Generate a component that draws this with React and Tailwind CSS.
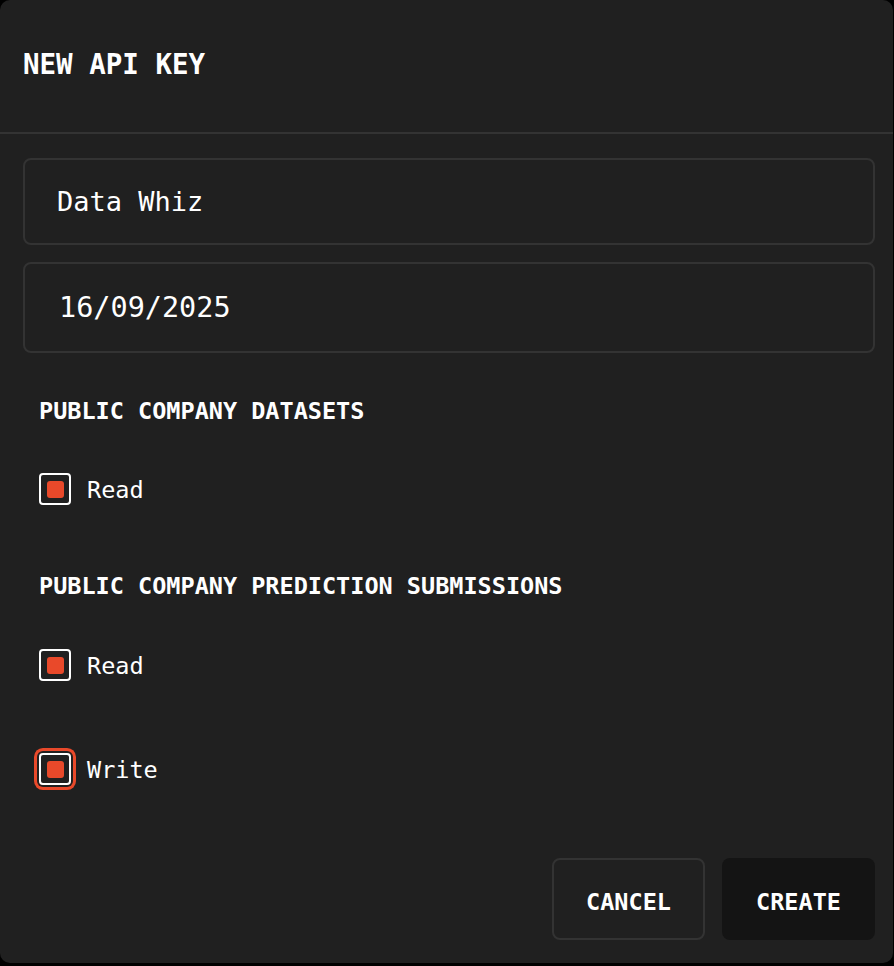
import React from 'react';

const mono = { fontFamily: '"DejaVu Sans Mono", "Liberation Mono", monospace' };

function Check({ focused }) {
    return (
        <span
            className={
                'w-[32px] h-[32px] rounded-[4px] border-2 border-white flex items-center justify-center shrink-0 ' +
                (focused ? 'ring-[3px] ring-[#e9492a] ring-offset-2 ring-offset-[#202020]' : '')
            }
        >
            <span className="w-[17px] h-[17px] rounded-[3px] bg-[#e9492a]" />
        </span>
    );
}

function Option({ label, focused, className }) {
    return (
        <div className={'h-[32px] flex items-center gap-[16px] pl-[16px] ' + className}>
            <Check focused={focused} />
            <span className="pt-[4px] text-[23.5px] text-white leading-none">{label}</span>
        </div>
    );
}

function Heading({ children, className }) {
    return (
        <div className={'h-[24px] flex items-center pl-[16px] text-[23.5px] font-bold text-white leading-none ' + className}>
            {children}
        </div>
    );
}

export default function App() {
    return (
        <div className="min-h-screen bg-black" style={mono}>
            <div className="w-[893px] h-[963px] rounded-[10px] bg-[#202020] flex flex-col">
                <header className="h-[134px] flex items-center px-[23px] pb-[3px] border-b-2 border-[#333333]">
                    <h1 className="text-[27.5px] font-bold text-white leading-none">NEW API KEY</h1>
                </header>

                <div className="px-[23px] pt-[24px] pr-[18px] flex flex-col">
                    <div className="h-[87px] border-2 border-[#333333] rounded-[8px] px-[32px] flex items-center text-[27px] text-white leading-none">
                        Data Whiz
                    </div>
                    <div className="mt-[17px] h-[91px] border-2 border-[#333333] rounded-[8px] px-[34px] pt-[2px] flex items-center text-[28.5px] text-white leading-none">
                        16/09/2025
                    </div>

                    <Heading className="mt-[47px]">PUBLIC COMPANY DATASETS</Heading>
                    <Option label="Read" className="mt-[49px]" />

                    <Heading className="mt-[70px]">PUBLIC COMPANY PREDICTION SUBMISSIONS</Heading>
                    <Option label="Read" className="mt-[50px]" />
                    <Option label="Write" focused className="mt-[72px]" />

                    <div className="mt-[73px] flex justify-end gap-[17px]">
                        <button className="w-[153px] h-[82px] pt-[8px] rounded-[8px] border-2 border-[#333333] text-[23.5px] font-bold text-white leading-none">
                            CANCEL
                        </button>
                        <button className="w-[153px] h-[82px] pt-[8px] rounded-[8px] bg-[#141414] text-[23.5px] font-bold text-white leading-none">
                            CREATE
                        </button>
                    </div>
                </div>
            </div>
        </div>
    );
}
